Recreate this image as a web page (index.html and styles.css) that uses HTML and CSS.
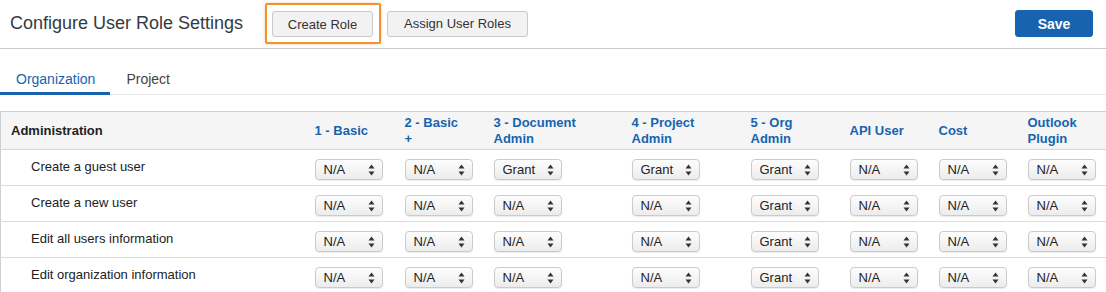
FILE: index.html
```html
<!DOCTYPE html>
<html lang="en">

<head>
    <meta charset="UTF-8">
    <title>Configure User Role Settings</title>
    <link rel="stylesheet" href="styles.css">
</head>

<body>
    <header class="topBar">
        <h1 class="pageTitle">Configure User Role Settings</h1>
        <div class="btnGroup">
            <span class="focusRing"><button class="btn btnCreate">Create Role</button></span>
            <button class="btn btnAssign">Assign User Roles</button>
        </div>
        <button class="btn btnPrimary">Save</button>
    </header>

    <nav class="tabs">
        <a class="tab tabActive">Organization</a>
        <a class="tab">Project</a>
    </nav>

    <table class="roles">
        <colgroup>
            <col style="width: 304px">
            <col style="width: 90px">
            <col style="width: 89px">
            <col style="width: 138px">
            <col style="width: 119px">
            <col style="width: 99px">
            <col style="width: 89px">
            <col style="width: 89px">
            <col style="width: 89px">
        </colgroup>
        <thead>
            <tr>
                <th class="groupName">Administration</th>
                <th>1 - Basic</th>
                <th>2 - Basic<br>+</th>
                <th>3 - Document<br>Admin</th>
                <th>4 - Project<br>Admin</th>
                <th>5 - Org<br>Admin</th>
                <th>API User</th>
                <th>Cost</th>
                <th>Outlook<br>Plugin</th>
            </tr>
        </thead>
        <tbody id="rows"></tbody>
    </table>

    <script>
        "use strict";

        // permission rows, one value per role column
        let rows = [
            ["Create a guest user", ["N/A", "N/A", "Grant", "Grant", "Grant", "N/A", "N/A", "N/A"]],
            ["Create a new user", ["N/A", "N/A", "N/A", "N/A", "Grant", "N/A", "N/A", "N/A"]],
            ["Edit all users information", ["N/A", "N/A", "N/A", "N/A", "Grant", "N/A", "N/A", "N/A"]],
            ["Edit organization information", ["N/A", "N/A", "N/A", "N/A", "Grant", "N/A", "N/A", "N/A"]]
        ];

        let arrows = '<svg class="selArrows" width="7" height="12" viewBox="0 0 7 12">' +
            '<path d="M3.5 0.5 L6.5 4.5 L0.5 4.5 Z" fill="#333"/>' +
            '<path d="M3.5 11.5 L6.5 7.5 L0.5 7.5 Z" fill="#333"/></svg>';

        let tbody = document.querySelector("#rows");
        rows.forEach(row => {
            let tr = document.createElement("tr");
            let html = '<td class="permName">' + row[0] + '</td>';
            row[1].forEach(val => {
                let other = val === "Grant" ? "N/A" : "Grant";
                html += '<td><span class="sel"><select>' +
                    '<option>' + val + '</option><option>' + other + '</option>' +
                    '</select>' + arrows + '</span></td>';
            });
            tr.innerHTML = html;
            tbody.appendChild(tr);
        });
    </script>
</body>

</html>
```

FILE: styles.css
```css
body {
    margin: 0;
    font-family: "Liberation Sans", Arial, sans-serif;
    font-size: 13px;
    color: #333;
    background-color: #fff;
}

.topBar {
    display: flex;
    align-items: center;
    height: 47px;
    padding: 0 13px 1px 10px;
    border-bottom: 1px solid #c8c8c8;
}

.pageTitle {
    margin: 0;
    font-size: 18px;
    font-weight: normal;
    color: #333a44;
    width: 255px;
}

.btnGroup {
    display: flex;
    align-items: center;
    gap: 6px;
    flex: 1;
}

.focusRing {
    display: inline-block;
    padding: 6px 6px 5px 5px;
    border: 2px solid #f29130;
    border-radius: 2px;
    box-shadow: 0 0 3px rgba(242, 145, 48, 0.5);
}

.btn {
    display: block;
    font-family: inherit;
    font-size: 13px;
    color: #333;
    height: 26px;
    padding: 0 13px;
    background-color: #f2f2f2;
    border: 1px solid #c9c9c9;
    border-radius: 3px;
}

.btnCreate {
    width: 101px;
}

.btnAssign {
    width: 141px;
}

.btnPrimary {
    width: 78px;
    height: 27px;
    color: #fff;
    font-weight: bold;
    font-size: 14px;
    background-color: #1763b0;
    border-color: #1763b0;
}

.tabs {
    display: flex;
    margin-top: 17px;
    border-bottom: 1px solid #e6e6e6;
}

.tab {
    display: block;
    padding: 5px 16px 5px 16px;
    font-size: 14px;
    color: #444;
    border-bottom: 3px solid transparent;
    margin-bottom: -1px;
}

.tabActive {
    color: #1763b0;
    border-bottom-color: #1763b0;
    padding-right: 15px;
}

.roles {
    margin-top: 16px;
    width: 1106px;
    table-layout: fixed;
    border-collapse: collapse;
    border-top: 1px solid #cfcfcf;
    border-left: 1px solid #cfcfcf;
}

.roles th {
    box-sizing: border-box;
    height: 38px;
    padding: 0 4px 0 10px;
    text-align: left;
    font-size: 13px;
    line-height: 16px;
    color: #1763b0;
    background-color: #f5f5f5;
    border-bottom: 1px solid #d6d6d6;
}

.roles th.groupName {
    color: #222;
    padding-left: 10px;
}

.roles td {
    box-sizing: border-box;
    height: 36px;
    padding: 0 0 0 10px;
    border-bottom: 1px solid #dcdcdc;
    line-height: 16px;
}

.roles td.permName {
    padding-left: 30px;
    font-size: 13px;
    color: #222;
    vertical-align: top;
    padding-top: 9px;
}

.sel {
    position: relative;
    display: block;
    width: 68px;
    height: 21px;
    margin-top: 4px;
}

.sel select {
    display: block;
    appearance: none;
    -webkit-appearance: none;
    width: 68px;
    height: 21px;
    padding: 0 0 0 8px;
    font-family: inherit;
    font-size: 13px;
    color: #222;
    border: 1px solid #cbcbcb;
    border-radius: 4px;
    background: linear-gradient(#fdfdfd, #ececec);
    box-shadow: 0 1px 1px rgba(0, 0, 0, 0.08);
}

.selArrows {
    position: absolute;
    right: 8px;
    top: 5px;
    pointer-events: none;
}
```
